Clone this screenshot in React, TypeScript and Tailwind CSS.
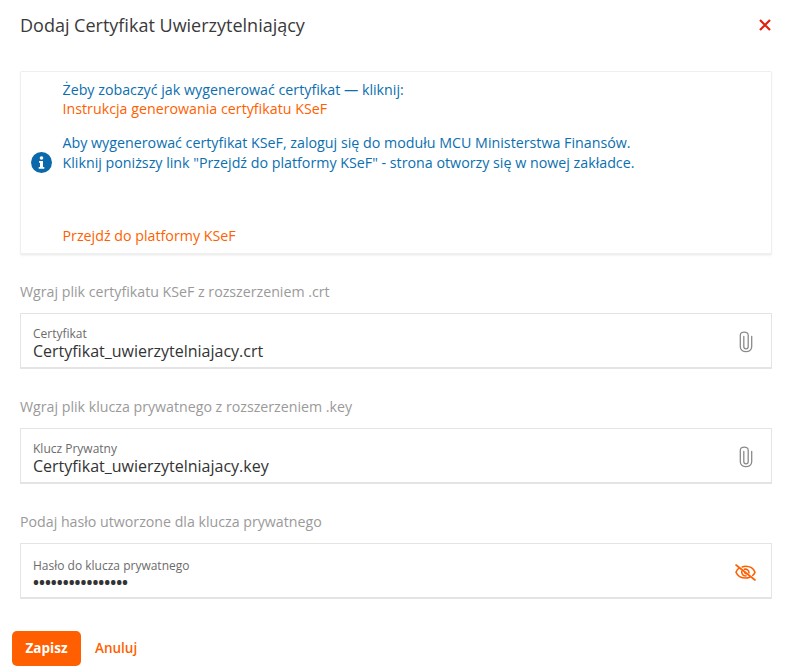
const font = { fontFamily: '"Open Sans", sans-serif' }

function PaperclipIcon() {
  return (
    <svg width="14" height="22" viewBox="0 0 14 22" fill="none" stroke="#8a8a8a" strokeWidth="1.3" strokeLinecap="round" className="mr-[3px]">
      <path d="M4.8 5.5v10c0 3.2 4.400 3.200 4.400 0V4.200c0-4.200-7.900-4.200-7.900 0v11.600c0 6.400 11.400 6.400 11.400 0V5.500" />
    </svg>
  )
}

function EyeOffIcon() {
  return (
    <svg width="21" height="17" viewBox="0 0 21 17" fill="none" stroke="#ff5f00" strokeWidth="1.6" strokeLinecap="round">
      <path d="M1 1l19 15" />
      <path d="M4 4.200C2.600 5.200 1.600 6.600 1 8.200c1.500 3.600 5 5.800 9.500 5.800 1.500 0 2.900-.3 4.200-.8" />
      <path d="M7.200 2.900c1-.4 2.100-.6 3.300-.6 4.500 0 8 2.300 9.500 5.900-.5 1.300-1.300 2.400-2.300 3.300" />
      <path d="M6.800 7.200c-.6 2.900 1.600 5 4.200 4.700" />
      <path d="M9.300 5.200c2.500-.5 4.700 1.300 4.700 3.700" />
      <path d="M9.800 8.500c.2.700.7 1.100 1.300 1.200" />
    </svg>
  )
}

function Field({ hint, label, value, icon, password }: { hint: string; label: string; value: string; icon: React.ReactNode; password?: boolean }) {
  return (
    <div>
      <p className="text-[14.2px] leading-[18px] text-[#9a9a9a]">{hint}</p>
      <div className="mt-[12px] flex h-[56px] items-center justify-between border border-b-2 border-[#e4e4e4] bg-white pl-[12px] pr-[15px]">
        <div className="pt-[6px]">
          <div className="text-[12px] leading-[16px] text-[#6b6b6b]">{label}</div>
          {password ? (
            <div className="text-[15.8px] font-bold leading-[16px] text-[#333]">{value}</div>
          ) : (
            <div className="mt-[-1px] text-[16px] leading-[20px] text-[#333]">{value}</div>
          )}
        </div>
        <div className="pt-[3px]">{icon}</div>
      </div>
    </div>
  )
}

export default function App() {
  return (
    <div className="h-[672px] w-[791px] overflow-hidden bg-white" style={font}>
      <div className="flex h-[71px] items-start justify-between pl-[20px] pr-[19px] pt-[12px]">
        <h1 className="text-[18px] leading-[26px] text-[#3a3a3a]">Dodaj Certyfikat Uwierzytelniający</h1>
        <svg width="14" height="14" viewBox="0 0 14 14" className="mt-[6px]" stroke="#e02010" strokeWidth="2.2">
          <path d="M2 2l10 10M12 2L2 12" />
        </svg>
      </div>

      <div className="ml-[20px] mr-[19px] flex h-[184px] items-center rounded-[2px] border border-b-2 border-[#efefef] bg-white pl-[10px] shadow-[0_1px_2px_rgba(0,0,0,0.05)]">
        <svg width="21" height="21" viewBox="0 0 21 21" className="shrink-0">
          <circle cx="10.500" cy="10.500" r="10.500" fill="#0b69ab" />
          <circle cx="10.500" cy="6" r="1.800" fill="#fff" />
          <path d="M8 9h4v6h1.300v1.700H7.700V15H9v-4.300H8z" fill="#fff" />
        </svg>
        <div className="ml-[10.5px] flex h-full flex-col pt-[8px] text-[14.25px] leading-[19px] text-[#0b6fb0]">
          <p>Żeby zobaczyć jak wygenerować certyfikat — kliknij:</p>
          <p className="text-[#ff5f00]">Instrukcja generowania certyfikatu KSeF</p>
          <p className="mt-[15px]">Aby wygenerować certyfikat KSeF, zaloguj się do modułu MCU Ministerstwa Finansów.</p>
          <p className="mt-[1px]">Kliknij poniższy link "Przejdź do platformy KSeF" - strona otworzy się w nowej zakładce.</p>
          <p className="mt-[54px] text-[#ff5f00]">Przejdź do platformy KSeF</p>
        </div>
      </div>

      <div className="ml-[20px] mr-[19px] mt-[28px] flex flex-col gap-[29px]">
        <Field hint="Wgraj plik certyfikatu KSeF z rozszerzeniem .crt" label="Certyfikat" value="Certyfikat_uwierzytelniajacy.crt" icon={<PaperclipIcon />} />
        <Field hint="Wgraj plik klucza prywatnego z rozszerzeniem .key" label="Klucz Prywatny" value="Certyfikat_uwierzytelniajacy.key" icon={<PaperclipIcon />} />
        <Field hint="Podaj hasło utworzone dla klucza prywatnego" label="Hasło do klucza prywatnego" value="••••••••••••••••" icon={<EyeOffIcon />} password />
      </div>

      <div className="ml-[12px] mt-[32px] flex items-center gap-[14px]">
        <button className="h-[35px] w-[69px] rounded-[5px] bg-[#ff5f00] text-[13.5px] font-bold text-white">Zapisz</button>
        <button className="text-[13.5px] font-semibold text-[#ff5f00]">Anuluj</button>
      </div>
    </div>
  )
}
